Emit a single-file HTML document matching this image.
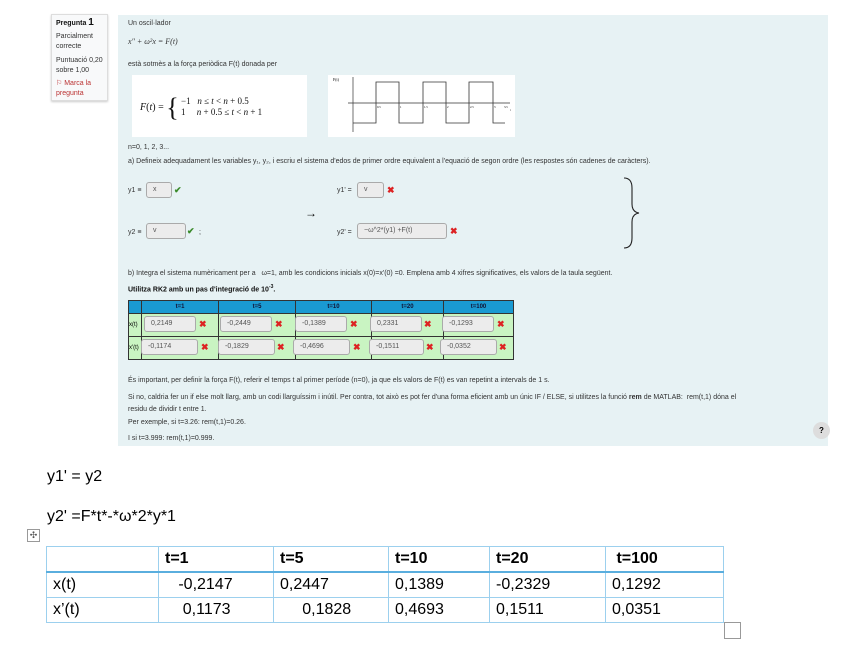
<!DOCTYPE html>
<html><head><meta charset="utf-8"><style>
body{margin:0;width:848px;height:654px;background:#fff;font-family:"Liberation Sans",sans-serif;position:relative;overflow:hidden}
.a{position:absolute}
.s{font-size:7px;color:#333;white-space:nowrap}
.inp{position:absolute;background:#ececec;border:1px solid #aaa;border-radius:3px;font-size:7px;color:#555;padding-left:6px;box-sizing:border-box;line-height:14px;height:16px}
.ok{color:#3a8a2a;font-size:9px;position:absolute;font-weight:bold}
.x{color:#d22;font-size:9px;position:absolute;font-weight:bold}
table.q{position:absolute;left:128px;top:300px;width:386px;border-collapse:collapse;font-size:6px;table-layout:fixed}
table.q td{border:1px solid #333;background:#c9f4c2;height:22px;position:relative;padding:0}
table.q tr.h td{background:#1a9ad2;height:12px;text-align:center;font-weight:bold;color:#113}
table.w{position:absolute;left:46px;top:546px;width:678px;border-collapse:collapse;font-size:16px;table-layout:fixed}
table.w td{border:1px solid #9cd0ee;height:24px;padding:0 0 0 6px}
table.w tr.h td{font-weight:bold;border-bottom:2px solid #5aaede}
</style></head><body>
<div class="a" style="left:51px;top:14px;width:55px;height:85px;background:#f8f9fa;border:1px solid #ddd;box-shadow:0 1px 2px #ccc"></div>
<div class="a s" style="left:56px;top:17px;font-weight:bold;color:#111">Pregunta <span style="font-size:10px">1</span></div>
<div class="a s" style="left:56px;top:32px;line-height:10px">Parcialment<br>correcte</div>
<div class="a s" style="left:56px;top:56px;line-height:10px">Puntuació 0,20<br>sobre 1,00</div>
<div class="a s" style="left:56px;top:79px;line-height:10px;color:#b33">⚐ Marca la<br>pregunta</div>

<div class="a" style="left:118px;top:15px;width:710px;height:431px;background:#e7f2f4"></div>
<div class="a s" style="left:128px;top:20px">Un oscil·lador</div>
<div class="a s" style="left:128px;top:37px;font-family:'Liberation Serif',serif;font-style:italic;font-size:8px">x″ + ω²x = F(t)</div>
<div class="a s" style="left:128px;top:61px">està sotmès a la força periòdica F(t) donada per</div>
<div class="a" style="left:132px;top:75px;width:175px;height:62px;background:#fff"></div>
<div class="a" style="left:140px;top:93px;font-family:'Liberation Serif',serif;font-size:10px;white-space:nowrap;color:#111"><i>F</i>(<i>t</i>) = <span style="font-size:26px;vertical-align:-6px">{</span></div>
<div class="a" style="left:181px;top:96px;font-family:'Liberation Serif',serif;font-size:9px;line-height:11px;white-space:nowrap;color:#111">−1 &nbsp; <i>n</i> ≤ <i>t</i> &lt; <i>n</i> + 0.5<br>1 &nbsp;&nbsp;&nbsp; <i>n</i> + 0.5 ≤ <i>t</i> &lt; <i>n</i> + 1</div>
<svg class="a" style="left:328px;top:75px" width="187" height="62"><rect width="187" height="62" fill="#fff"/>
<text x="5" y="6" font-size="4" font-family="Liberation Serif">F(t)</text>
<line x1="25" y1="2" x2="25" y2="57" stroke="#333" stroke-width=".7"/>
<line x1="20" y1="28" x2="182" y2="28" stroke="#333" stroke-width=".7"/>
<polyline points="25,48 48,48 48,7 71,7 71,48 95,48 95,7 118,7 118,48 141,48 141,7 165,7 165,48 177,48" fill="none" stroke="#333" stroke-width=".8"/>
<g font-size="3" font-family="Liberation Serif"><text x="49" y="33">0.5</text><text x="72" y="33">1</text><text x="96" y="33">1.5</text><text x="119" y="33">2</text><text x="142" y="33">2.5</text><text x="166" y="33">3</text><text x="176" y="33">3.5</text><text x="182" y="36">t</text></g></svg>
<div class="a s" style="left:128px;top:144px">n=0, 1, 2, 3...</div>
<div class="a s" style="left:128px;top:158px">a) Defineix adequadament les variables y₁, y₂, i escriu el sistema d'edos de primer ordre equivalent a l'equació de segon ordre (les respostes són cadenes de caràcters).</div>
<div class="a s" style="left:128px;top:187px">y1 ≡</div><div class="inp" style="left:146px;top:182px;width:26px">x</div><div class="ok" style="left:174px;top:185px">✔</div>
<div class="a s" style="left:128px;top:229px">y2 ≡</div><div class="inp" style="left:146px;top:223px;width:40px">v</div><div class="ok" style="left:187px;top:226px">✔</div><div class="a s" style="left:199px;top:229px">;</div>
<div class="a" style="left:305px;top:206px;font-size:12px">→</div>
<div class="a s" style="left:337px;top:187px">y1' =</div><div class="inp" style="left:357px;top:182px;width:27px">v</div><div class="x" style="left:387px;top:185px">✖</div>
<div class="a s" style="left:337px;top:229px">y2' =</div><div class="inp" style="left:357px;top:223px;width:90px">−ω^2*(y1) +F(t)</div><div class="x" style="left:450px;top:226px">✖</div>
<svg class="a" style="left:622px;top:176px" width="24" height="74"><path d="M2,2 Q10,2 10,12 L10,28 Q10,36 17,37 Q10,38 10,46 L10,62 Q10,72 2,72" fill="none" stroke="#222" stroke-width="1.1"/></svg>
<div class="a s" style="left:128px;top:270px">b) Integra el sistema numèricament per a &nbsp; ω=1, amb les condicions inicials x(0)=x'(0) =0. Emplena amb 4 xifres significatives, els valors de la taula següent.</div>
<div class="a s" style="left:128px;top:284px;font-weight:bold;color:#111">Utilitza RK2 amb un pas d'integració de 10<sup style="font-size:5px">-3</sup>.</div>
<table class="q"><tr class="h"><td style="width:12px"></td><td style="width:76px">t=1</td><td style="width:76px">t=5</td><td style="width:75px">t=10</td><td style="width:71px">t=20</td><td>t=100</td></tr>
<tr><td>x(t)</td><td></td><td></td><td></td><td></td><td></td></tr><tr><td>x'(t)</td><td></td><td></td><td></td><td></td><td></td></tr></table>
<div class="inp" style="left:144px;top:316px;width:52px">0,2149</div><div class="x" style="left:199px;top:319px">✖</div>
<div class="inp" style="left:220px;top:316px;width:52px">-0,2449</div><div class="x" style="left:275px;top:319px">✖</div>
<div class="inp" style="left:295px;top:316px;width:52px">-0,1389</div><div class="x" style="left:350px;top:319px">✖</div>
<div class="inp" style="left:370px;top:316px;width:52px">0,2331</div><div class="x" style="left:424px;top:319px">✖</div>
<div class="inp" style="left:442px;top:316px;width:52px">-0,1293</div><div class="x" style="left:497px;top:319px">✖</div>
<div class="inp" style="left:141px;top:339px;width:57px">-0,1174</div><div class="x" style="left:201px;top:342px">✖</div>
<div class="inp" style="left:218px;top:339px;width:57px">-0,1829</div><div class="x" style="left:277px;top:342px">✖</div>
<div class="inp" style="left:293px;top:339px;width:57px">-0,4696</div><div class="x" style="left:353px;top:342px">✖</div>
<div class="inp" style="left:369px;top:339px;width:55px">-0,1511</div><div class="x" style="left:426px;top:342px">✖</div>
<div class="inp" style="left:440px;top:339px;width:57px">-0,0352</div><div class="x" style="left:499px;top:342px">✖</div>
<div class="a s" style="left:128px;top:377px">És important, per definir la força F(t), referir el temps t al primer període (n=0), ja que els valors de F(t) es van repetint a intervals de 1 s.</div>
<div class="a s" style="left:128px;top:392px;line-height:12px">Si no, caldria fer un if else molt llarg, amb un codi llarguíssim i inútil. Per contra, tot això es pot fer d'una forma eficient amb un únic IF / ELSE, si utilitzes la funció <b>rem</b> de MATLAB: &nbsp;rem(t,1) dóna el<br>residu de dividir t entre 1.</div>
<div class="a s" style="left:128px;top:419px">Per exemple, si t=3.26: rem(t,1)=0.26.</div>
<div class="a s" style="left:128px;top:435px">I si t=3.999: rem(t,1)=0.999.</div>
<div class="a" style="left:813px;top:422px;width:17px;height:17px;border-radius:50%;background:#ddd;font-size:8px;font-weight:bold;text-align:center;line-height:17px">?</div>

<div class="a" style="left:47px;top:468px;font-size:16px">y1' = y2</div>
<div class="a" style="left:47px;top:508px;font-size:16px">y2' =F*t*-*ω*2*y*1</div>
<div class="a" style="left:27px;top:529px;width:11px;height:11px;border:1px solid #999;font-size:9px;line-height:11px;text-align:center;color:#555">✣</div>
<table class="w"><tr class="h"><td style="width:105px"></td><td style="width:108px">t=1</td><td style="width:108px">t=5</td><td style="width:94px">t=10</td><td style="width:109px">t=20</td><td>&nbsp;t=100</td></tr>
<tr><td>x(t)</td><td>&nbsp;&nbsp;&nbsp;-0,2147</td><td>0,2447</td><td>0,1389</td><td>-0,2329</td><td>0,1292</td></tr>
<tr><td>x’(t)</td><td>&nbsp;&nbsp;&nbsp;&nbsp;0,1173</td><td>&nbsp;&nbsp;&nbsp;&nbsp;&nbsp;0,1828</td><td>0,4693</td><td>0,1511</td><td>0,0351</td></tr></table>
<div class="a" style="left:724px;top:622px;width:15px;height:15px;border:1px solid #999"></div>
</body></html>
